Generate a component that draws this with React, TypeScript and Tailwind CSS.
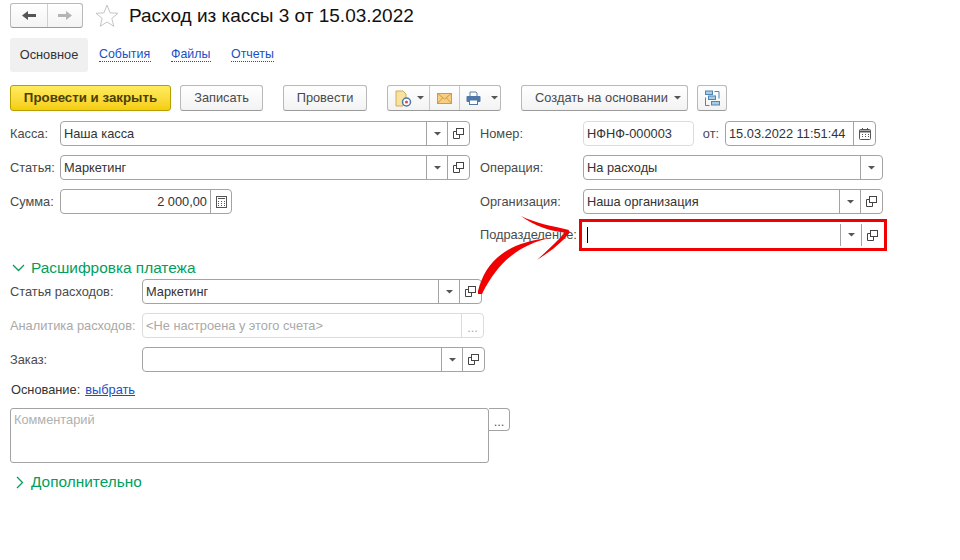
import React from "react";

const Tri = () => (
  <svg width="7" height="4" viewBox="0 0 7 4" className="block"><path d="M0 0h7L3.500 3.500z" fill="#555" /></svg>
);

const CopyIcon = () => (
  <svg width="11" height="11" viewBox="0 0 11 11" fill="none" stroke="#444" strokeWidth="1" className="block">
    <rect x="3.500" y=".5" width="7" height="6" />
    <path d="M3.500 3.500H.5v7h6v-4" />
  </svg>
);

const Divider = ({ c = "bg-[#a3a3a3]" }: { c?: string }) => <div className={`w-px self-stretch shrink-0 ${c}`} />;

const Pick = () => (
  <>
    <Divider />
    <div className="w-5 shrink-0 flex items-center justify-center"><Tri /></div>
    <Divider />
    <div className="w-[21px] shrink-0 flex items-center justify-center"><CopyIcon /></div>
  </>
);

const Label = ({ children, w, muted }: { children: React.ReactNode; w: string; muted?: boolean }) => (
  <div className={`${w} shrink-0 whitespace-nowrap ${muted ? "text-[#a9a9a9]" : "text-[#4a4a4a]"}`}>{children}</div>
);

const Box = ({ w, children, muted }: { w: string; children?: React.ReactNode; muted?: boolean }) => (
  <div className={`${w} h-[25px] shrink-0 flex items-stretch rounded-[4px] border bg-white ${muted ? "border-[#dcdcdc]" : "border-[#a3a3a3]"}`}>
    {children}
  </div>
);

const Val = ({ children, right }: { children?: React.ReactNode; right?: boolean }) => (
  <div className={`flex-1 min-w-0 flex items-center px-[3px] text-[#333] ${right ? "justify-end" : ""}`}>{children}</div>
);

const Btn = ({ w, children }: { w: string; children: React.ReactNode }) => (
  <button className={`${w} h-[26px] shrink-0 flex items-center justify-center rounded-[3px] border border-[#b9b9b9] border-b-[#9a9a9a] bg-gradient-to-b from-white to-[#f3f3f3] text-[#4a4a4a] text-[12.800px]`}>
    {children}
  </button>
);

const Tab = ({ children, w }: { children: React.ReactNode; w: string }) => (
  <span className={`${w} text-[#1a4fc4] border-b border-dotted border-[#1a4fc4] leading-[13px] whitespace-nowrap text-[12.400px]`}>{children}</span>
);

const Section = ({ open, children }: { open?: boolean; children: React.ReactNode }) => (
  <div className="flex items-center h-[20px] text-[#00a060] text-[15.400px]">
    <div className={`w-[21px] flex shrink-0 ${open ? "pl-[2px]" : "pl-[6px]"}`}>
      {open ? (
        <svg width="13" height="8" viewBox="0 0 13 8" fill="none" stroke="#0a9a5a" strokeWidth="1.300"><path d="M1 1l5.500 5.500L12 1" /></svg>
      ) : (
        <svg width="8" height="13" viewBox="0 0 8 13" fill="none" stroke="#0a9a5a" strokeWidth="1.300"><path d="M1 1l5.500 5.500L1 12" /></svg>
      )}
    </div>
    {children}
  </div>
);

export default function App() {
  return (
    <div className="relative w-[960px] h-[560px] overflow-hidden bg-white pl-[10px] pt-[3px] text-[12.800px] text-[#4a4a4a] font-['Liberation_Sans',Arial,sans-serif]">
      {/* Title row */}
      <div className="flex items-center h-[25px]">
        <div className="w-[73px] h-[25px] flex rounded-[3px] border border-[#b9b9b9] border-b-[#9a9a9a] bg-gradient-to-b from-white to-[#f3f3f3] shrink-0">
          <div className="w-[36px] flex items-center justify-center">
            <svg width="14" height="11" viewBox="0 0 14 11"><path d="M0 5.500L6 1v3h8v3H6v3z" fill="#555" /></svg>
          </div>
          <Divider c="bg-[#d0d0d0]" />
          <div className="flex-1 flex items-center justify-center">
            <svg width="14" height="11" viewBox="0 0 14 11"><path d="M14 5.500L8 1v3H0v3h8v3z" fill="#b5b5b5" /></svg>
          </div>
        </div>
        <svg width="24" height="23" viewBox="0 0 24 23" fill="#fff" stroke="#c4c4c4" strokeWidth="1" className="ml-[12px] shrink-0">
          <path d="M12 1l3 7.800 8 .5-6.200 5.100 2 7.900L12 18l-6.800 4.300 2-7.900L1 9.300l8-.5z" />
        </svg>
        <div className="ml-[10px] text-[19px] leading-[25px] text-[#111] whitespace-nowrap">Расход из кассы 3 от 15.03.2022</div>
      </div>

      {/* Tabs */}
      <div className="flex items-center mt-[10px] h-[34px]">
        <div className="w-[78px] h-[34px] flex items-center justify-center rounded-[3px] bg-[#f0f0f0] text-[#333]">Основное</div>
        <div className="flex items-center ml-[11px] gap-[20px]">
          <Tab w="w-[52px]">События</Tab>
          <Tab w="w-[40px]">Файлы</Tab>
          <Tab w="w-[43px]">Отчеты</Tab>
        </div>
      </div>

      {/* Toolbar */}
      <div className="flex items-center mt-[13px]">
        <button className="w-[161px] h-[26px] shrink-0 rounded-[3px] border border-[#b79f00] bg-gradient-to-b from-[#ffec5c] to-[#f5cd00] font-bold text-[#4b4000] text-[13.300px]">
          Провести и закрыть
        </button>
        <div className="ml-[9px]"><Btn w="w-[83px]">Записать</Btn></div>
        <div className="ml-[20px]"><Btn w="w-[84px]">Провести</Btn></div>
        <div className="ml-[20px] w-[114px] h-[26px] flex rounded-[3px] border border-[#b9b9b9] border-b-[#9a9a9a] bg-gradient-to-b from-white to-[#f3f3f3]">
          <div className="w-[41px] flex items-center pl-[7px] gap-[5px]">
            <svg width="17" height="17" viewBox="0 0 17 17" className="shrink-0">
              <path d="M1 1h7l3 3v6H8v6H1z" fill="#f6e3a2" stroke="#d3ac52" />
              <circle cx="11.500" cy="12" r="4" fill="#fff" stroke="#4d78a8" strokeWidth="1.500" />
              <circle cx="11.500" cy="12" r="1.600" fill="#d9505a" />
            </svg>
            <Tri />
          </div>
          <Divider c="bg-[#c8c8c8]" />
          <div className="w-[29px] flex items-center justify-center">
            <svg width="15" height="11" viewBox="0 0 15 11"><rect x=".5" y=".5" width="14" height="10" fill="#f6cf85" stroke="#d49a42" /><path d="M.5.500l7 5.500 7-5.500M.5 10.500l5-5.500M14.500 10.500l-5-5.500" fill="none" stroke="#d49a42" /></svg>
          </div>
          <Divider c="bg-[#c8c8c8]" />
          <div className="flex-1 flex items-center pl-[6px] gap-[10px]">
            <svg width="15" height="14" viewBox="0 0 15 14" className="shrink-0">
              <path d="M4 5V1h6l1 1v3" fill="#fff" stroke="#5a7ea6" />
              <rect x=".5" y="5" width="14" height="6" rx="1" fill="#4d78a8" />
              <rect x="3.500" y="9" width="8" height="4.500" fill="#fff" stroke="#4d78a8" />
            </svg>
            <Tri />
          </div>
        </div>
        <div className="ml-[20px]">
          <Btn w="w-[167px]">
            <span className="ml-[7px] mr-[6px] whitespace-nowrap">Создать на основании</span>
            <Tri />
          </Btn>
        </div>
        <div className="ml-[9px]">
          <Btn w="w-[30px]">
            <svg width="16" height="17" viewBox="0 0 16 17" fill="none" stroke="#4d86b5">
              <path d="M10.500 1.500h4.500v7M1.500 7.500v8h4" />
              <rect x="1.500" y="1" width="7" height="3.500" fill="#a9cbe3" />
              <rect x="4.500" y="6" width="7" height="3.500" fill="#a9cbe3" />
              <rect x="7.500" y="11.500" width="8" height="3.500" fill="#a9cbe3" />
            </svg>
          </Btn>
        </div>
      </div>

      {/* Main form */}
      <div className="flex mt-[10px]">
        <div className="w-[470px] shrink-0 flex flex-col gap-[9px]">
          <div className="flex items-center">
            <Label w="w-[50px]">Касса:</Label>
            <Box w="w-[410px]"><Val>Наша касса</Val><Pick /></Box>
          </div>
          <div className="flex items-center">
            <Label w="w-[50px]">Статья:</Label>
            <Box w="w-[410px]"><Val>Маркетинг</Val><Pick /></Box>
          </div>
          <div className="flex items-center">
            <Label w="w-[50px]">Сумма:</Label>
            <Box w="w-[172px]">
              <Val right>2 000,00</Val>
              <Divider />
              <div className="w-[20px] flex items-center justify-center">
                <svg width="11" height="12" viewBox="0 0 11 12" fill="none" stroke="#555"><rect x=".5" y=".5" width="10" height="11" /><path d="M2 2.500h7" /><path d="M2 5.500h1M5 5.500h1M8 5.500h1M2 7.500h1M5 7.500h1M8 7.500h1M2 9.500h1M5 9.500h1M8 9.500h1" /></svg>
              </div>
            </Box>
          </div>
        </div>

        <div className="flex flex-col gap-[9px]">
          <div className="flex items-center">
            <Label w="w-[103px]">Номер:</Label>
            <Box w="w-[111px]" muted><Val><span>НФНФ-000003</span></Val></Box>
            <div className="w-[31px] text-center text-[#4a4a4a] pl-[3px]">от:</div>
            <Box w="w-[151px]">
              <Val>15.03.2022 11:51:44</Val>
              <Divider />
              <div className="w-[21px] flex items-center justify-center">
                <svg width="12" height="12" viewBox="0 0 12 12" fill="none" stroke="#555"><rect x=".5" y="1.500" width="11" height="10" rx="1" /><path d="M.5 3.500h11" strokeWidth="2" /><path d="M3.500 0v2M8.500 0v2M3 6.500h1M6 6.500h1M9 6.500h1M3 8.500h1M6 8.500h1M9 8.500h1" /></svg>
              </div>
            </Box>
          </div>
          <div className="flex items-center">
            <Label w="w-[103px]">Операция:</Label>
            <Box w="w-[300px]">
              <Val>На расходы</Val>
              <Divider />
              <div className="w-[21px] flex items-center justify-center"><Tri /></div>
            </Box>
          </div>
          <div className="flex items-center">
            <Label w="w-[103px]">Организация:</Label>
            <Box w="w-[300px]"><Val>Наша организация</Val><Pick /></Box>
          </div>
          <div className="flex items-center">
            <Label w="w-[99px]">Подразделение:</Label>
            <div className="w-[308px] h-[32px] -my-[4px] border-[3px] border-[#f00000] flex items-stretch py-[2px] pl-[5px]">
              <div className="flex-1 flex items-center"><div className="w-px h-[16px] bg-black" /></div>
              <Pick />
              <div className="w-[1px]" />
            </div>
          </div>
        </div>
      </div>

      {/* Detail section */}
      <div className="mt-[11px]"><Section open>Расшифровка платежа</Section></div>
      <div className="flex flex-col gap-[9px] mt-[1px]">
        <div className="flex items-center">
          <Label w="w-[132px]">Статья расходов:</Label>
          <Box w="w-[340px]"><Val>Маркетинг</Val><Pick /></Box>
        </div>
        <div className="flex items-center">
          <Label w="w-[132px]" muted>Аналитика расходов:</Label>
          <Box w="w-[342px]" muted>
            <div className="flex-1 flex items-center px-[3px] text-[#a9a9a9]">&lt;Не настроена у этого счета&gt;</div>
            <Divider c="bg-[#dcdcdc]" />
            <div className="w-[21px] flex items-end justify-center pb-[4px] text-[#a9a9a9] leading-[10px]">...</div>
          </Box>
        </div>
        <div className="flex items-center">
          <Label w="w-[132px]">Заказ:</Label>
          <Box w="w-[343px]"><Val /><Pick /></Box>
        </div>
      </div>

      <div className="flex items-center mt-[10px] pl-px h-[16px]">
        <span className="text-[#333]">Основание:</span>
        <span className="ml-[5px] text-[#1a4fc4] underline">выбрать</span>
      </div>

      <div className="flex items-start mt-[10px]">
        <div className="w-[479px] h-[55px] rounded-[3px] border border-[#a3a3a3] px-[3px] py-[4px] text-[#b0b0b0] leading-[14px]">Комментарий</div>
        <div className="w-[21px] h-[23px] rounded-r-[4px] border border-l-0 border-[#a3a3a3] flex items-end justify-center pb-[3px] text-[#555] leading-[10px]">...</div>
      </div>

      <div className="mt-[9px]"><Section>Дополнительно</Section></div>

      {/* Annotation arrow */}
      <svg className="absolute left-[470px] top-[205px] pointer-events-none" width="110" height="100" viewBox="470 205 110 100" fill="#f00000">
        <path d="M478 291 C485 264 503 243 549 238 C522 245 500 258 482 294 L478 294 Z" />
        <path d="M521 216 C535 223 552 226 569 230 L567 233 C550 231 534 226 521 216 Z" />
        <path d="M537 260 C547 251 558 240 568 230 L570 232 C560 245 549 252 537 260 Z" />
      </svg>
    </div>
  );
}
